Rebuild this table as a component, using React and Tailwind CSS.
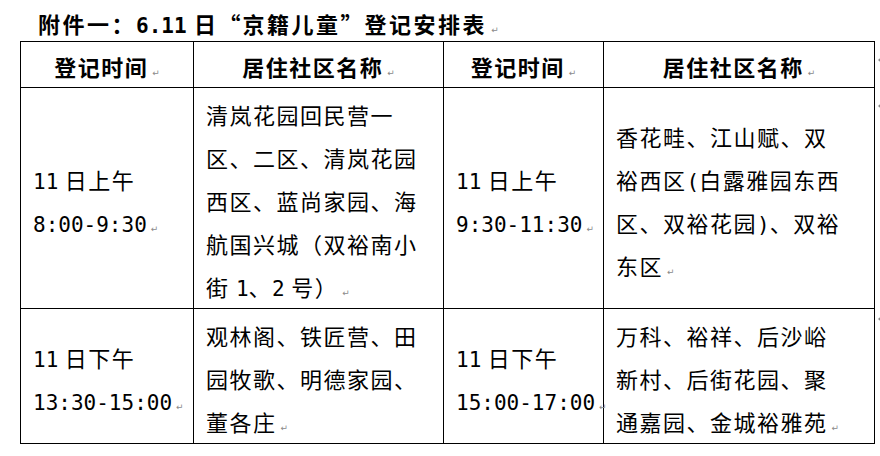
import React from 'react';

const cjk = "font-['Noto_Sans_CJK_SC',sans-serif]";

function Mark() {
  return <span className="ml-[4px] font-['DejaVu_Sans',sans-serif] text-[9px] font-normal leading-none tracking-normal text-[#8a8a8a]">↵</span>;
}

function Num({ children, bold }) {
  return (
    <span className={`font-['DejaVu_Sans_Mono',monospace] text-[21px] leading-none tracking-normal ${bold ? 'font-bold' : 'font-normal'}`}>
      {children}
    </span>
  );
}

// full-width curly quotes, as in the original document font
function Quote({ children, open }) {
  return <span className={`inline-block w-[24px] leading-none ${open ? 'text-right' : 'text-left'}`}>{children}</span>;
}

function RowEnd({ className }) {
  return (
    <svg className={className} width="5" height="8" viewBox="0 0 5 8">
      <path d="M4.5 1 L1 4 L4.5 7 Z" fill="#8a8a8a" />
    </svg>
  );
}

function TimeCell({ day, range }) {
  return (
    <td className="border border-black px-[12px] pt-[5px] pb-0 align-middle leading-[43px]">
      <div>
        <Num>11</Num> 日{day}
      </div>
      <div className="whitespace-nowrap">
        <Num>{range}</Num>
        <Mark />
      </div>
    </td>
  );
}

function PlaceCell({ lines }) {
  return (
    <td className="border border-black px-[12px] pt-[5px] pb-0 align-middle leading-[43px]">
      {lines.map((line, i) => (
        <div key={i} className="whitespace-nowrap">
          {line}
          {i === lines.length - 1 && <Mark />}
        </div>
      ))}
    </td>
  );
}

function HeadCell({ children }) {
  return (
    <th className="h-[46px] border border-black pt-[2px] pb-0 text-center align-middle font-bold leading-[40px]">
      {children}
      <Mark />
    </th>
  );
}

export default function App() {
  return (
    <div className={`${cjk} min-h-[456px] w-[880px] bg-white text-[22px] tracking-[1.5px] text-black`}>
      <div className="h-[41px] pl-[38px] pt-[5px] font-bold leading-[36px] tracking-[2.5px] whitespace-nowrap">
        附件一：<Num bold>6.11</Num> 日<Quote open>“</Quote>京籍儿童<Quote>”</Quote>登记安排表
        <Mark />
      </div>

      <div className="flex items-start pl-[20px]">
        <table className="w-[854px] table-fixed border-collapse">
          <colgroup>
            <col className="w-[173px]" />
            <col className="w-[250px]" />
            <col className="w-[160px]" />
            <col className="w-[271px]" />
          </colgroup>
          <thead>
            <tr>
              <HeadCell>登记时间</HeadCell>
              <HeadCell>居住社区名称</HeadCell>
              <HeadCell>登记时间</HeadCell>
              <HeadCell>居住社区名称</HeadCell>
            </tr>
          </thead>
          <tbody>
            <tr>
              <TimeCell day="上午" range="8:00-9:30" />
              <PlaceCell
                lines={[
                  '清岚花园回民营一',
                  '区、二区、清岚花园',
                  '西区、蓝尚家园、海',
                  '航国兴城（双裕南小',
                  <>
                    街 <Num>1</Num>、<Num>2</Num> 号）
                  </>,
                ]}
              />
              <TimeCell day="上午" range="9:30-11:30" />
              <PlaceCell
                lines={[
                  '香花畦、江山赋、双',
                  <>
                    裕西区<Num>(</Num>白露雅园东西
                  </>,
                  <>
                    区、双裕花园<Num>)</Num>、双裕
                  </>,
                  '东区',
                ]}
              />
            </tr>
            <tr>
              <TimeCell day="下午" range="13:30-15:00" />
              <PlaceCell lines={['观林阁、铁匠营、田', '园牧歌、明德家园、', '董各庄']} />
              <TimeCell day="下午" range="15:00-17:00" />
              <PlaceCell lines={['万科、裕祥、后沙峪', '新村、后街花园、聚', '通嘉园、金城裕雅苑']} />
            </tr>
          </tbody>
        </table>

        <div className="ml-[2px] flex w-[5px] flex-col">
          <RowEnd className="mt-[15px]" />
          <RowEnd className="mt-[38px]" />
          <RowEnd className="mt-[205px]" />
        </div>
      </div>
    </div>
  );
}
